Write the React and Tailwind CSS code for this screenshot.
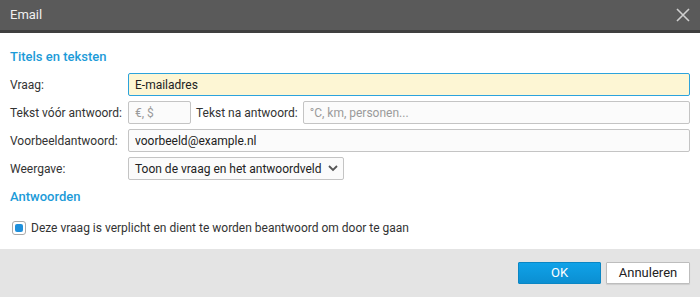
import React from 'react'

const Row = ({ label, children }) => (
  <div className="flex items-center h-[23px] mb-[5px]">
    <label className="w-[118px] shrink-0 whitespace-nowrap">{label}</label>
    {children}
  </div>
)

const inputCls = "h-[23px] border border-[#c4c4c4] rounded-[2px] bg-[#fbfbfb] px-[6px] text-[12px] text-[#222] outline-none placeholder:text-[#9a9a9a] min-w-0"

const App = () => {
  return (
    <div className="w-[700px] h-[297px] bg-white flex flex-col text-[12px] text-[#333]" style={{ fontFamily: 'Roboto, "Liberation Sans", sans-serif' }}>
      <div className="h-[30px] bg-[#5a5a5a] flex items-center justify-between pl-[10px] pr-[10px] border-b-[3px] border-[#3f3f3f] box-content">
        <span className="text-[#f0f0f0] text-[13px]">Email</span>
        <button className="text-[#cfcfcf]">
          <svg width="14" height="14" viewBox="0 0 14 14" stroke="currentColor" strokeWidth="1.6">
            <path d="M1 1 L13 13 M13 1 L1 13" />
          </svg>
        </button>
      </div>

      <div className="flex-1 px-[10px] pt-[14px]">
        <h2 className="text-[#1c9bd8] font-medium text-[13px] leading-[20px] mb-[6px]">Titels en teksten</h2>
        <Row label="Vraag:">
          <input className={inputCls + " flex-1 !border-[#2ca3dc] !bg-[#fdf6d4]"} defaultValue="E-mailadres" />
        </Row>
        <Row label="Tekst vóór antwoord:">
          <input className={inputCls + " w-[63px]"} placeholder="€, $" />
          <label className="ml-[5px] mr-[5px] whitespace-nowrap">Tekst na antwoord:</label>
          <input className={inputCls + " flex-1"} placeholder="°C, km, personen..." />
        </Row>
        <Row label="Voorbeeldantwoord:">
          <input className={inputCls + " flex-1"} defaultValue="voorbeeld@example.nl" />
        </Row>
        <Row label="Weergave:">
          <div className={inputCls + " w-[216px] flex items-center justify-between pr-[5px] whitespace-nowrap"}>
            <span>Toon de vraag en het antwoordveld</span>
            <svg width="10" height="7" viewBox="0 0 10 7" fill="none" stroke="#555" strokeWidth="1.8">
              <path d="M1 1 L5 5 L9 1" />
            </svg>
          </div>
        </Row>
        <h2 className="text-[#1c9bd8] font-medium text-[13px] leading-[20px] mt-[7px] mb-[12px]">Antwoorden</h2>
        <div className="flex items-center">
          <span className="w-[14px] h-[14px] ml-[2px] border border-[#aaa] rounded-[3px] bg-white flex items-center justify-center">
            <span className="w-[8px] h-[8px] bg-[#1e90dc] rounded-[2px]" />
          </span>
          <span className="ml-[5px]">Deze vraag is verplicht en dient te worden beantwoord om door te gaan</span>
        </div>
      </div>

      <div className="h-[48px] bg-[#e4e4e4] flex items-center justify-end gap-[5px] pr-[10px]">
        <button className="w-[83px] h-[22px] bg-gradient-to-b from-[#10a2e8] to-[#0b8fd2] border border-[#0a86c4] text-white text-[13px] rounded-[1px]">OK</button>
        <button className="w-[84px] h-[22px] bg-white border border-[#bdbdbd] text-[#222] text-[13px] rounded-[1px] shadow-[0_1px_1px_rgba(0,0,0,0.1)]">Annuleren</button>
      </div>
    </div>
  )
}

export default App
